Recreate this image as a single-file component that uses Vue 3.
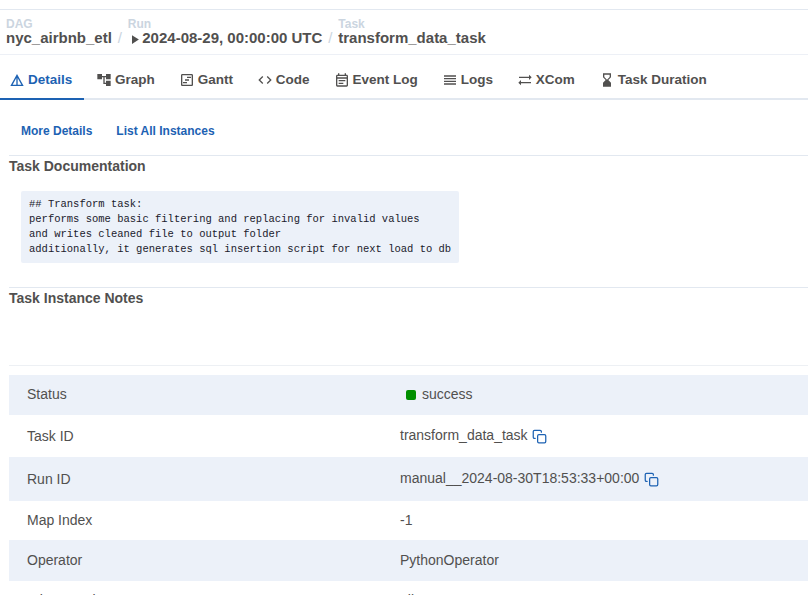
<script setup>
const crumbs = [
  { label: 'DAG', value: 'nyc_airbnb_etl' },
  { label: 'Run', value: '2024-08-29, 00:00:00 UTC', play: true },
  { label: 'Task', value: 'transform_data_task' },
]

const tabs = [
  { name: 'Details', active: true, path: 'M12 3 2 21h20L12 3zm1 5.92L18.6 19H13V8.92zm-2 0V19H5.4L11 8.92z' },
  { name: 'Graph', path: 'M22 11V3h-7v3H9V3H2v8h7V8h2v10h4v3h7v-8h-7v3h-2V8h2v3z' },
  { name: 'Gantt', path: 'M19 5v14H5V5h14m0-2H5c-1.1 0-2 .9-2 2v14c0 1.1.9 2 2 2h14c1.1 0 2-.9 2-2V5c0-1.1-.9-2-2-2zM6 15h6v2H6zM12 7h6v2h-6zM9 11h6v2H9z' },
  { name: 'Code', path: 'M9.4 16.6 4.8 12l4.6-4.6L8 6l-6 6 6 6 1.4-1.4zm5.2 0 4.6-4.6-4.6-4.6L16 6l6 6-6 6-1.4-1.4z' },
  { name: 'Event Log', path: 'M19 4h-1V2h-2v2H8V2H6v2H5c-1.11 0-1.99.9-1.99 2L3 20a2 2 0 0 0 2 2h14c1.1 0 2-.9 2-2V6c0-1.1-.9-2-2-2zm0 16H5V10h14v10zm0-12H5V6h14v2zM7 12h10v2H7zm0 4h7v2H7z' },
  { name: 'Logs', path: 'M3 15h18v-2H3v2zm0 4h18v-2H3v2zm0-8h18V9H3v2zm0-6v2h18V5H3z' },
  { name: 'XCom', path: 'm18 12 4-4-4-4v3H3v2h15zM6 12l-4 4 4 4v-3h15v-2H6z' },
  { name: 'Task Duration', path: 'M18 22l-.01-6L14 12l3.99-4.01L18 2H6v6l4 4-4 3.99V22h12zM8 7.5V4h8v3.5l-4 4-4-4z' },
]

const doc = `## Transform task:
performs some basic filtering and replacing for invalid values
and writes cleaned file to output folder
additionally, it generates sql insertion script for next load to db`

const rows = [
  { label: 'Status', value: 'success', kind: 'status' },
  { label: 'Task ID', value: 'transform_data_task', kind: 'copy' },
  { label: 'Run ID', value: 'manual__2024-08-30T18:53:33+00:00', kind: 'copy tall' },
  { label: 'Map Index', value: '-1', kind: 'short' },
  { label: 'Operator', value: 'PythonOperator', kind: 'plain' },
  { label: 'Trigger Rule', value: 'all_success', kind: 'plain' },
]
</script>

<template>
  <div class="page">
    <header class="crumbs">
      <template v-for="(c, i) in crumbs" :key="c.label">
        <span v-if="i" class="slash">/</span>
        <div class="crumb">
          <span class="crumb-label">{{ c.label }}</span>
          <span class="crumb-value">
            <svg v-if="c.play" class="play" viewBox="0 0 24 24"><path d="M8 5v14l11-7z" /></svg>{{ c.value }}
          </span>
        </div>
      </template>
    </header>

    <nav class="tabs">
      <a v-for="t in tabs" :key="t.name" class="tab" :class="{ active: t.active }">
        <svg class="tab-icon" viewBox="0 0 24 24"><path :d="t.path" /></svg>
        <span class="tab-name">{{ t.name }}</span>
      </a>
    </nav>

    <main class="content">
      <div class="links">
        <a>More Details</a>
        <a>List All Instances</a>
      </div>
      <section class="docs">
        <h2>Task Documentation</h2>
        <pre>{{ doc }}</pre>
      </section>
      <section class="notes">
        <h2>Task Instance Notes</h2>
      </section>
      <div class="table">
        <div v-for="r in rows" :key="r.label" class="row" :class="r.kind">
          <span class="cell-label">{{ r.label }}</span>
          <span class="cell-value">
            <i v-if="r.kind === 'status'" class="dot"></i>
            <span>{{ r.value }}</span>
            <svg v-if="r.kind.startsWith('copy')" class="copy-icon" viewBox="0 0 24 24">
              <rect x="9" y="9" width="13" height="13" rx="2" />
              <path d="M5 15H4a2 2 0 0 1-2-2V4a2 2 0 0 1 2-2h9a2 2 0 0 1 2 2v1" />
            </svg>
          </span>
        </div>
      </div>
    </main>
  </div>
</template>

<style>
body {
  margin: 0;
  overflow: hidden;
}
</style>

<style scoped>
.page {
  box-sizing: border-box;
  height: 595px;
  overflow: hidden;
  padding-top: 9px;
  background: #fff;
  color: #51504f;
  font-family: "Liberation Sans", Arial, sans-serif;
  font-size: 14px;
}
.crumbs {
  box-sizing: border-box;
  height: 46px;
  display: flex;
  align-items: flex-start;
  padding: 8px 0 0 6px;
  border-top: 1px solid #e2e8f0;
  border-bottom: 1px solid #edf0f6;
}
.crumb {
  display: flex;
  flex-direction: column;
  font-weight: bold;
}
.crumb-label {
  color: #cbd5e0;
  font-size: 12px;
  line-height: 12px;
}
.crumb-value {
  display: flex;
  font-size: 15px;
  line-height: 16px;
}
.play {
  width: 15px;
  height: 15px;
  margin: 2px 0 0 -0.5px;
  fill: currentColor;
}
.slash {
  width: 15.9px;
  padding-top: 12px;
  color: #cbd5e0;
  font-size: 15px;
  line-height: 16px;
  text-align: center;
}
.tabs {
  box-sizing: border-box;
  height: 45px;
  display: flex;
  border-bottom: 2px solid #e2e8f0;
}
.tab {
  box-sizing: border-box;
  height: 45px;
  display: flex;
  align-items: center;
  gap: 2.9px;
  padding: 5px 12px 0;
  font-size: 13.5px;
  font-weight: bold;
  white-space: nowrap;
}
.tab.active {
  padding-left: 9px;
  color: #1d62b3;
  box-shadow: inset 0 -2px #1d62b3;
}
.tab-icon {
  width: 16px;
  height: 16px;
  fill: currentColor;
}
.tab-name {
  padding-bottom: 2px;
}
.content {
  padding-left: 9px;
}
.links {
  box-sizing: border-box;
  height: 55px;
  display: flex;
  gap: 24px;
  padding: 24px 0 0 12px;
  color: #1d62b3;
  font-size: 12px;
  font-weight: bold;
  line-height: 14px;
}
.docs,
.notes {
  box-sizing: border-box;
  border-top: 1px solid #e2e8f0;
}
.docs {
  height: 132px;
}
.notes {
  height: 78px;
}
h2 {
  margin: 0;
  padding-top: 2px;
  font-size: 14px;
  line-height: 17px;
}
pre {
  box-sizing: border-box;
  width: 438px;
  height: 72px;
  margin: 16px 0 0 12px;
  padding: 6px 8px;
  border-radius: 2px;
  background: #ecf1f9;
  color: #1a202c;
  font: 10.5px/15px "Liberation Mono", monospace;
}
.table {
  padding-top: 9px;
  border-top: 1px solid #edf0f4;
}
.row {
  box-sizing: border-box;
  height: 41px;
  display: grid;
  grid-template-columns: 373px 1fr;
  align-items: center;
  padding: 0 0 2px 18px;
  line-height: 16px;
}
.row:nth-child(odd) {
  background: #ecf1f9;
}
.row.status {
  height: 40px;
}
.row.copy {
  height: 42px;
  padding-bottom: 0;
}
.row.tall {
  height: 44px;
}
.row.short {
  height: 39px;
}
.row:last-child {
  padding-bottom: 4px;
}
.cell-value {
  display: flex;
  align-items: center;
}
.dot {
  width: 10px;
  height: 10px;
  margin: 2px 6px 0;
  border-radius: 2px;
  background: #008f00;
}
.copy .cell-value {
  align-items: flex-start;
  margin-top: -2px;
}
.copy-icon {
  width: 15px;
  height: 15px;
  margin: 2px 0 -2px 4.5px;
  fill: none;
  stroke: #1d62b3;
  stroke-width: 2;
  stroke-linecap: round;
  stroke-linejoin: round;
}
</style>
